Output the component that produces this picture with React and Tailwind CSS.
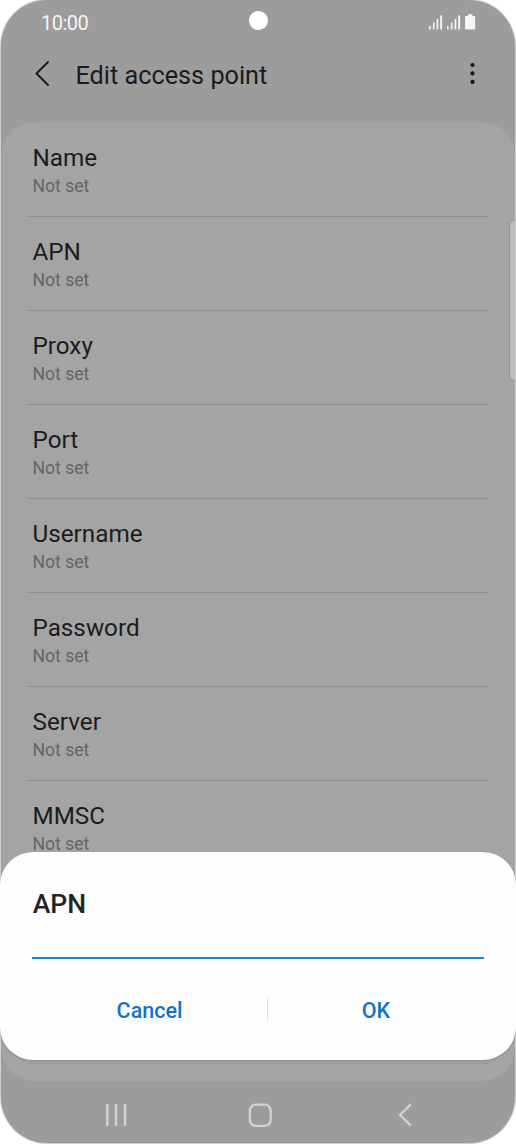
import React from "react";

const fields = ["Name", "APN", "Proxy", "Port", "Username", "Password", "Server", "MMSC"];

function SignalIcon() {
  return (
    <svg width="14" height="15" viewBox="0 0 14 15" fill="#f5f5f5">
      <rect x="0" y="11" width="1.6" height="3.4" />
      <rect x="3.9" y="7.5" width="1.6" height="6.9" />
      <rect x="7.6" y="4" width="1.7" height="10.4" />
      <rect x="11.2" y="0.4" width="1.9" height="14" />
    </svg>
  );
}

function StatusBar() {
  return (
    <div className="relative flex h-10 items-start justify-between pl-10 pr-[39px]">
      <span className="mt-[11px] text-[20px] leading-6 tracking-[-0.5px] text-[#f5f5f5]">10:00</span>
      <div className="absolute left-[247.5px] top-[10.5px] h-[19px] w-[19px] rounded-full bg-white" />
      <div className="mt-[15px] flex gap-1">
        <SignalIcon />
        <SignalIcon />
        <svg className="-mt-px" width="11" height="16" viewBox="0 0 11 16" fill="#f5f5f5">
          <path d="M3 0.3H7.4V1.9H9Q10.2 1.9 10.2 3V14.4Q10.2 15.5 9 15.5H1.2Q0 15.5 0 14.4V3Q0 1.9 1.2 1.9H3Z" />
        </svg>
      </div>
    </div>
  );
}

function Header() {
  return (
    <div className="flex h-[82px] items-start pl-[33px] pr-[38px]">
      <svg className="mt-5" width="16" height="28" viewBox="0 0 16 28" fill="none" stroke="#171717" strokeWidth="1.8" strokeLinecap="round" strokeLinejoin="round">
        <path d="M14 2L2.5 13.5L14 25" />
      </svg>
      <h1 className="ml-[25.5px] mt-[21px] text-[25.25px] leading-[30px] text-[#1b1b1b]">Edit access point</h1>
      <svg className="ml-auto mt-[22px]" width="10" height="24" viewBox="0 0 10 24" fill="#171717">
        <circle cx="5.5" cy="3" r="2.1" />
        <circle cx="5.5" cy="11.4" r="2.1" />
        <circle cx="5.5" cy="19.9" r="2.1" />
      </svg>
    </div>
  );
}

function Field({ label }) {
  return (
    <div className="mx-[26px] h-[94px] shrink-0 border-b border-[#919191] pl-[5.5px] pt-5">
      <div className="text-[24.25px] leading-[30px] text-[#1c1c1c]">{label}</div>
      <div className="mt-px text-[17.6px] leading-6 text-[#656565]">Not set</div>
    </div>
  );
}

function ApnDialog() {
  return (
    <div className="absolute left-0 top-[852px] z-10 h-[208px] w-[516px] rounded-[33px] bg-[#fdfdfd] px-8 pt-9 shadow-[0_1px_2px_rgba(0,0,0,0.2)]">
      <h2 className="pl-[0.7px] text-[26.6px] font-medium leading-8 text-[#252525]">APN</h2>
      <div className="mt-[37px] h-[2px] bg-[#1c86d6]" />
      <div className="mt-[39px] flex h-[22px] items-center text-[21.5px] font-medium leading-6 text-[#1273cc]">
        <button className="w-[235px] pt-[3px]">Cancel</button>
        <div className="h-[22px] w-px bg-[#e2e2e2]" />
        <button className="w-[216px] pt-[3px]">OK</button>
      </div>
    </div>
  );
}

function NavBar() {
  return (
    <div className="flex h-[62px] items-center pl-[103px] pr-[102px] pt-[6px]">
      <svg width="24" height="24" viewBox="0 0 24 24" stroke="#d2d2d2" strokeWidth="2.5" strokeLinecap="round">
        <path d="M3.3 2.2V21.8M12 2.2V21.8M21 2.2V21.8" />
      </svg>
      <svg className="ml-[119px]" width="26" height="26" viewBox="0 0 26 26" fill="none" stroke="#d2d2d2" strokeWidth="2.3">
        <rect x="2.8" y="2.6" width="20.9" height="21.3" rx="6" />
      </svg>
      <svg className="ml-auto" width="16" height="24" viewBox="0 0 16 24" fill="none" stroke="#d2d2d2" strokeWidth="2.4" strokeLinecap="round" strokeLinejoin="miter">
        <path d="M13.2 2L3 12L13.2 22" />
      </svg>
    </div>
  );
}

export default function App() {
  return (
    <div className="relative h-[1146px] w-[516px] overflow-hidden bg-white px-px font-['Roboto',sans-serif]">
      <div className="relative flex h-[1143px] flex-col overflow-hidden rounded-[46px] bg-[#9c9c9c] shadow-[0_0_0_1px_#d0d0d0]">
        <StatusBar />
        <Header />
        <div className="flex h-[959px] flex-col overflow-hidden rounded-[34px] bg-[#a4a4a4] pt-px">
          {fields.map((label) => (
            <Field key={label} label={label} />
          ))}
          <div className="mx-[26px] h-[189px] shrink-0 border-b border-[#999999]" />
        </div>
        <NavBar />
        {/* edge panel handle */}
        <div className="absolute -right-1 top-[220px] h-[161px] w-[10px] rounded-[5px] border border-[#959595] bg-[#bdbdbd]" />
      </div>
      <ApnDialog />
    </div>
  );
}
